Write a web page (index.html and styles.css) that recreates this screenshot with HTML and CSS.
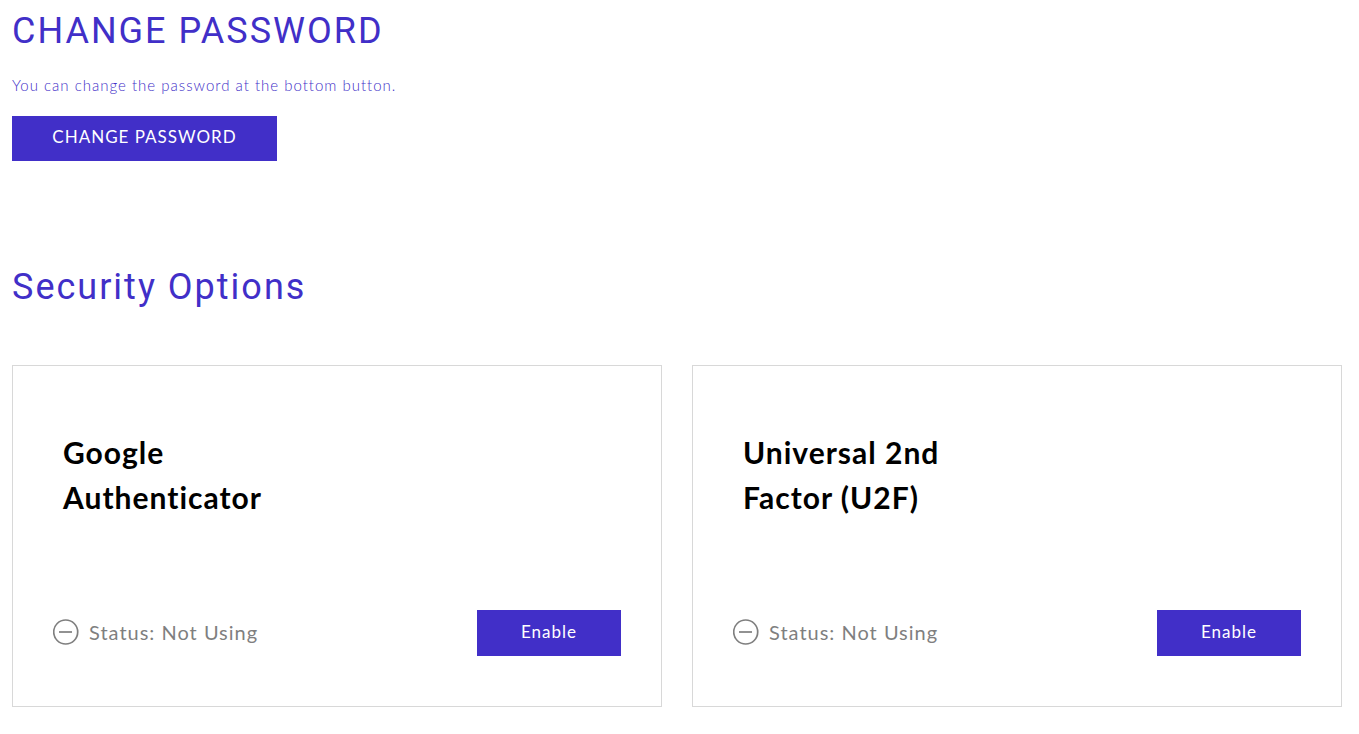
FILE: index.html
```
<!DOCTYPE html>
<html lang="en">
<head>
    <meta charset="UTF-8">
    <meta name="viewport" content="width=device-width, initial-scale=1.0">
    <title>Security</title>
    <link rel="stylesheet" href="styles.css">
</head>
<body>

    <!-- Change Password Section -->
    <section class="password">
        <h2>CHANGE PASSWORD</h2>
        <p>You can change the password at the bottom button.</p>
        <button type="button" class="btn btn-password">CHANGE PASSWORD</button>
    </section>

    <!-- Security Options Section -->
    <section class="security">
        <h2>Security Options</h2>
        <div class="options">
            <div class="option">
                <h3>Google Authenticator</h3>
                <div class="option-footer">
                    <div class="status">
                        <svg class="status-icon" viewBox="0 0 26 26" aria-hidden="true">
                            <circle cx="12.7" cy="13" r="12"/>
                            <path d="M6 13h13"/>
                        </svg>
                        <span>Status: Not Using</span>
                    </div>
                    <button type="button" class="btn">Enable</button>
                </div>
            </div>
            <div class="option">
                <h3>Universal 2nd Factor (U2F)</h3>
                <div class="option-footer">
                    <div class="status">
                        <svg class="status-icon" viewBox="0 0 26 26" aria-hidden="true">
                            <circle cx="12.7" cy="13" r="12"/>
                            <path d="M6 13h13"/>
                        </svg>
                        <span>Status: Not Using</span>
                    </div>
                    <button type="button" class="btn">Enable</button>
                </div>
            </div>
        </div>
    </section>

</body>
</html>
```
FILE: styles.css
```
/* Base styling */
* {
    box-sizing: border-box;
}

body {
    margin: 0;
    padding: 8px 17px 27px 12px;
    font-family: Lato, sans-serif;
    letter-spacing: 1px;
    background-color: #fff;
    color: #000;
}

h2 {
    margin: 0;
    font-family: Roboto, sans-serif;
    font-size: 36px;
    font-weight: 400;
    line-height: 46px;
    letter-spacing: 2px;
    color: #412fc8;
}

/* Change password */
.password p {
    margin: 20px 0;
    font-size: 15px;
    font-weight: 300;
    line-height: 22px;
    color: #412fc8;
}

/* Button styling */
.btn {
    min-width: 144px;
    height: 46px;
    padding: 0 40px 4px;
    border: none;
    background-color: #412fc8;
    color: #fff;
    font-family: inherit;
    font-size: 17px;
    letter-spacing: inherit;
    cursor: pointer;
}

.btn:hover {
    background-color: #3526a8;
}

.btn-password {
    min-width: 265px;
    height: 45px;
}

/* Security option cards */
.security {
    margin-top: 103px;
}

.options {
    display: grid;
    grid-template-columns: 1fr 1fr;
    gap: 30px;
    margin-top: 55px;
}

.option {
    padding: 64px 40px 50px;
    border: 1px solid #d8d8d8;
}

.option h3 {
    max-width: 240px;
    margin: 0 0 90px;
    padding-left: 10px;
    font-size: 30px;
    font-weight: 700;
    line-height: 45px;
}

.option-footer {
    display: flex;
    align-items: center;
    justify-content: space-between;
}

.status {
    display: flex;
    align-items: center;
    gap: 10px;
    padding-bottom: 2px;
    font-size: 20px;
    color: #7f7f7f;
}

.status-icon {
    width: 26px;
    height: 26px;
    fill: none;
    stroke: #7f7f7f;
    stroke-width: 1.7;
}
```
